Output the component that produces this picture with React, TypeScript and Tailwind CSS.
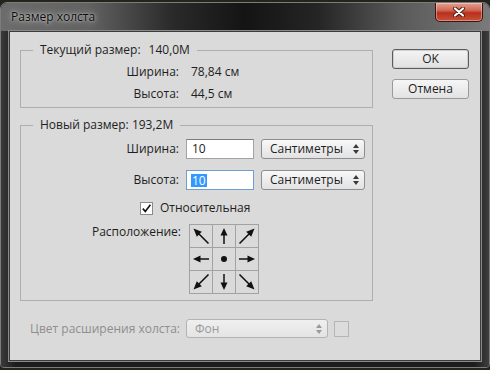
import React from "react";

function UpDown({ dim = false }: { dim?: boolean }) {
  const c = dim ? "#9a9a9a" : "#3a3a3a";
  return (
    <svg width="6" height="10" viewBox="0 0 6 10">
      <polygon points="3,0 6,4 0,4" fill={c} />
      <polygon points="3,10 6,6 0,6" fill={c} />
    </svg>
  );
}

function Straight({ deg }: { deg: number }) {
  return (
    <svg width="22" height="22" viewBox="0 0 22 22">
      <g transform={`rotate(${deg} 11 11)`}>
        <line x1="11" y1="10" x2="11" y2="19" stroke="#111" strokeWidth="1.5" />
        <polygon points="11,3 7.5,10.5 14.5,10.5" fill="#111" />
      </g>
    </svg>
  );
}

function Diagonal({ deg }: { deg: number }) {
  return (
    <svg width="22" height="22" viewBox="0 0 22 22">
      <g transform={`rotate(${deg} 11 11)`}>
        <line x1="18.5" y1="18.5" x2="8" y2="8" stroke="#111" strokeWidth="1.6" />
        <polygon points="3.5,3.5 11.8,6.8 6.8,11.8" fill="#111" />
      </g>
    </svg>
  );
}

function Select({ label, w, dim = false }: { label: string; w: string; dim?: boolean }) {
  return (
    <div
      className={`flex items-center justify-between ${w} rounded-[3px] border pl-[8px] pr-[5px] ${
        dim
          ? "h-[19px] border-[#b3b3b3] bg-[linear-gradient(#efefef,#e4e4e4)] text-[#9a9a9a]"
          : "h-[20px] border-[#8e8e8e] bg-[linear-gradient(#f8f8f8,#e2e2e2)] text-[#1e1e1e]"
      }`}
    >
      <span className="leading-[16px]">{label}</span>
      <UpDown dim={dim} />
    </div>
  );
}

export default function App() {
  const cells = [
    <Diagonal key="nw" deg={0} />,
    <Straight key="n" deg={0} />,
    <Diagonal key="ne" deg={90} />,
    <Straight key="w" deg={270} />,
    <svg key="c" width="22" height="22" viewBox="0 0 22 22">
      <circle cx="11" cy="11" r="3" fill="#111" />
    </svg>,
    <Straight key="e" deg={90} />,
    <Diagonal key="sw" deg={270} />,
    <Straight key="s" deg={180} />,
    <Diagonal key="se" deg={180} />,
  ];

  return (
    <div className="w-[490px] h-[370px] bg-[#25241c] pt-[2px] font-['Open_Sans',sans-serif] text-[12px] text-[#1e1e1e]">
      <div className="h-[366px] flex flex-col rounded-t-[7px] rounded-b-[4px] border border-[#7c7c7c] bg-[#262626] overflow-hidden">
        {/* title bar */}
        <div className="h-[28px] flex items-start justify-between pl-[10px] pr-[6px] bg-[linear-gradient(90deg,#6c6c6c_0%,#626262_18%,#2a2a2a_35%,#141414_50%,#252525_65%,#5a5a5a_82%,#7a7a7a_100%)]">
          <span className="mt-[6px] leading-[16px] text-[#0a0a0a] [text-shadow:0_0_6px_rgba(255,255,255,0.8),0_0_2px_rgba(255,255,255,0.6)]">
            Размер холста
          </span>
          <div className="w-[48px] h-[19px] rounded-b-[5px] border border-t-0 border-[#3b1510] bg-[linear-gradient(#e6a090,#d06a55_40%,#b9301b_55%,#c8503a)] shadow-[inset_0_0_0_1px_rgba(255,255,255,0.35)] flex items-center justify-center">
            <svg width="12" height="10" viewBox="0 0 12 10">
              <path d="M2 1.5 L10 8.5 M10 1.5 L2 8.5" stroke="#4a1a12" strokeWidth="4" strokeLinecap="round" />
              <path d="M2 1.5 L10 8.5 M10 1.5 L2 8.5" stroke="#fff" strokeWidth="2.2" strokeLinecap="round" />
            </svg>
          </div>
        </div>

        {/* client */}
        <div className="flex-1 px-[8px] pb-[6px] bg-[linear-gradient(90deg,#3a3a3a,#1c1c1c_3%,#1c1c1c_97%,#3e3e3e)]">
          <div className="h-full flex items-start border border-[#3c3c3c] shadow-[0_0_0_1px_#8a8a8a] bg-[#dadada] pl-[10px] pt-[10px]">
            <div className="w-[353px] flex flex-col">
              <fieldset className="border border-[#aeaeae] pb-[2px]">
                <legend className="ml-[12px] px-[7px] leading-[16px]">
                  Текущий размер:<span className="ml-[8px]">140,0M</span>
                </legend>
                <div className="mt-[3px] grid grid-cols-[158px_auto] gap-x-[12px] leading-[22px]">
                  <span className="text-right">Ширина:</span>
                  <span>78,84 см</span>
                  <span className="text-right">Высота:</span>
                  <span>44,5 см</span>
                </div>
              </fieldset>

              <fieldset className="mt-[9px] border border-[#aeaeae] pb-[6px]">
                <legend className="ml-[12px] px-[7px] leading-[16px]">Новый размер: 193,2M</legend>
                <div className="mt-[6px] flex items-center h-[20px]">
                  <span className="w-[158px] text-right">Ширина:</span>
                  <div className="ml-[7px] w-[68px] h-[20px] border border-[#a3a3a3] border-t-[#7c7c7c] bg-white pl-[5px] leading-[18px]">
                    10
                  </div>
                  <div className="ml-[7px]">
                    <Select label="Сантиметры" w="w-[104px]" />
                  </div>
                </div>
                <div className="mt-[11px] flex items-center h-[20px]">
                  <span className="w-[158px] text-right">Высота:</span>
                  <div className="ml-[7px] w-[68px] h-[20px] flex items-center border border-[#6f9fcf] bg-white pl-[4px]">
                    <span className="bg-[#3399ff] text-white leading-[13px] px-[1px]">10</span>
                  </div>
                  <div className="ml-[7px]">
                    <Select label="Сантиметры" w="w-[104px]" />
                  </div>
                </div>
                <div className="mt-[10px] h-[16px] flex items-center pl-[119px]">
                  <div className="w-[13px] h-[13px] border border-[#8a8a8a] bg-white flex items-center justify-center">
                    <svg width="11" height="11" viewBox="0 0 11 11">
                      <path d="M1.8 5.6 L4.3 8.4 L9.4 1.8" fill="none" stroke="#111" strokeWidth="1.6" />
                    </svg>
                  </div>
                  <span className="ml-[7px] leading-[16px]">Относительная</span>
                </div>
                <div className="mt-[8px] flex items-start">
                  <span className="w-[160px] text-right leading-[16px]">Расположение:</span>
                  <div className="ml-[8px] grid grid-cols-[22px_22px_22px] gap-px p-px bg-[#a2a2a2]">
                    {cells.map((c, i) => (
                      <div key={i} className="w-[22px] h-[22px] bg-[#dadada]">
                        {c}
                      </div>
                    ))}
                  </div>
                </div>
              </fieldset>

              <div className="mt-[18px] flex items-center h-[19px]">
                <span className="w-[160px] text-right text-[#8e8e8e]">Цвет расширения холста:</span>
                <div className="ml-[6px]">
                  <Select label="Фон" w="w-[142px]" dim />
                </div>
                <div className="ml-[6px] w-[15px] h-[16px] border border-[#b5b5b5] bg-[#dcdcdc]" />
              </div>
            </div>

            <div className="ml-[19px] pt-[7px] flex flex-col gap-[10px]">
              <button className="w-[77px] h-[20px] rounded-[3px] border border-[#5c5c5c] shadow-[inset_0_0_0_1px_#cfcfcf] bg-[linear-gradient(#f4f4f4,#e0e0e0)] leading-[16px]">
                OK
              </button>
              <button className="w-[77px] h-[20px] rounded-[3px] border border-[#9a9a9a] bg-[linear-gradient(#f6f6f6,#e2e2e2)] leading-[16px]">
                Отмена
              </button>
            </div>
          </div>
        </div>
      </div>
    </div>
  );
}
